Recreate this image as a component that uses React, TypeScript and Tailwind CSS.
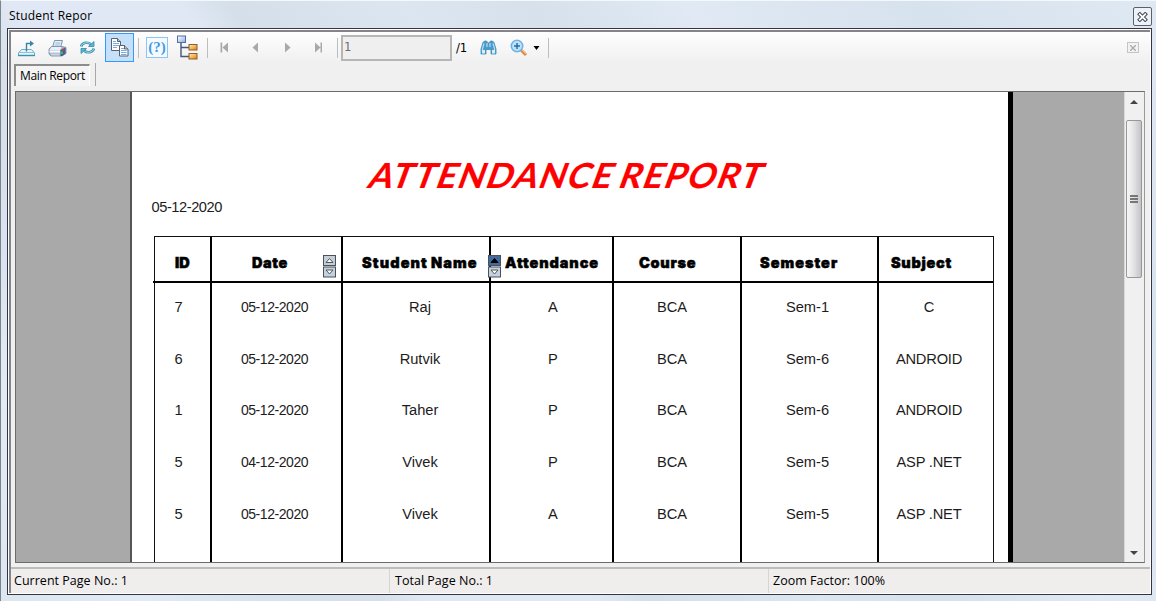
import React from "react";

const HEADERS = [
  { label: "ID", cell: "w-[57px] pr-0 justify-center", text: "tracking-[0.2px]" },
  { label: "Date", cell: "w-[131px] pl-[40px]", text: "tracking-[0.6px]", sort: "idle" },
  { label: "Student Name", cell: "w-[148px] pl-[19px]", text: "tracking-[1.1px] [word-spacing:-1px]", sort: "active" },
  { label: "Attendance", cell: "w-[123px] pl-[14px]", text: "tracking-[0.900px]" },
  { label: "Course", cell: "w-[128px] pl-[25px]", text: "tracking-[0.700px]" },
  { label: "Semester", cell: "w-[137px] pl-[18px]", text: "tracking-[1.000px]" },
  { label: "Subject", cell: "w-[116px] pl-[12px]", text: "tracking-[0.700px]" },
];

const ROWS = [
  ["7", "05-12-2020", "Raj", "A", "BCA", "Sem-1", "C"],
  ["6", "05-12-2020", "Rutvik", "P", "BCA", "Sem-6", "ANDROID"],
  ["1", "05-12-2020", "Taher", "P", "BCA", "Sem-6", "ANDROID"],
  ["5", "04-12-2020", "Vivek", "P", "BCA", "Sem-5", "ASP .NET"],
  ["5", "05-12-2020", "Vivek", "A", "BCA", "Sem-5", "ASP .NET"],
];

const CELLS = [
  "w-[57px] pr-[8px]",
  "w-[131px] pr-[4px] text-[14px] tracking-[-0.45px]",
  "w-[148px] pl-[8px]",
  "w-[123px] pl-[3px]",
  "w-[128px] pr-[10px]",
  "w-[137px] pr-[4px]",
  "w-[116px] pr-[16px] tracking-[-0.2px]",
];

function Sep({ className }: { className: string }) {
  return <div className={`h-5 w-px shrink-0 bg-[#bdbdbd] ${className}`} />;
}

function ExportIcon() {
  return (
    <svg width="20" height="19" viewBox="0 0 20 19" className="shrink-0" fill="none">
      <path d="M4.500 11.500h10l3 3.500v2.500h-16V15z" fill="#e6f3f9" stroke="#6fb0c9" />
      <path d="M1.500 14.500h16" stroke="#8fc4d8" />
      <path d="M1 17.500h17" stroke="#3c8fb0" strokeWidth="1.400" />
      <path d="M9.500 13.500V5.500H14" stroke="#3a86a5" strokeWidth="1.400" />
      <path d="M13 2.500l4 3-4 3z" fill="#3a86a5" />
    </svg>
  );
}

function PrinterIcon() {
  return (
    <svg width="19" height="18" viewBox="0 0 19 18" className="shrink-0">
      <path d="M6.500 1.500h8l-2 7h-8z" fill="#e5f0fa" stroke="#7c95ad" />
      <path d="M7.500 4h5M6.800 6h5" stroke="#9bb8d4" />
      <path d="M3.500 7.500h11l3.500 1v6L14 17H3l-2-2v-5z" fill="#a9b7cb" stroke="#7788a3" strokeWidth=".8" />
      <path d="M3.500 8h10l-1.500 3H1.500z" fill="#e9f0f8" />
      <path d="M1.500 11.500H12v2H1.500z" fill="#fff" />
      <path d="M12.500 11l5-2.500v6L14 17h-1.500z" fill="#3f5c93" />
      <rect x="14" y="9.800" width="2.500" height="2" fill="#c34145" />
      <path d="M12 12.500h3v2.500h-3z" fill="#42b77c" />
      <path d="M2.500 14.500H12l-.5 2h-8z" fill="#c5d3e4" />
    </svg>
  );
}

function RefreshIcon() {
  return (
    <svg width="17" height="15" viewBox="0 0 17 15" className="shrink-0" fill="none">
      <path d="M2 6.500C3.500 2.300 9 1.500 12 4.500" stroke="#4094b6" strokeWidth="2.600" />
      <path d="M2 6.500C3.500 2.300 9 1.500 12 4.500" stroke="#9fdaec" strokeWidth="1" />
      <path d="M15 1.500v5H9.500z" fill="#5eb4d1" stroke="#338aad" strokeWidth=".8" />
      <path d="M15 8.500c-1.500 4.200-7 5-10 2" stroke="#4094b6" strokeWidth="2.600" />
      <path d="M15 8.500c-1.500 4.200-7 5-10 2" stroke="#9fdaec" strokeWidth="1" />
      <path d="M2 13.500v-5h5.500z" fill="#5eb4d1" stroke="#338aad" strokeWidth=".8" />
    </svg>
  );
}

function PagesIcon() {
  return (
    <svg width="20" height="19" viewBox="0 0 20 19">
      <path d="M1.500.500h6l3 3v9h-9z" fill="#fff" stroke="#59616b" />
      <path d="M7.500.500v3h3" fill="#b9c6d3" stroke="#59616b" />
      <path d="M3 3.500h3M3 5.500h6M3 7.500h6M3 9.500h4" stroke="#74aee0" />
      <path d="M9.500 7.500h5l3.500 3.500v7h-8.500z" fill="#fff" stroke="#59616b" />
      <path d="M14.500 7.500v3.500h3.500" fill="#b9c6d3" stroke="#59616b" />
      <path d="M11 10.500h3M11 12.500h5.500M11 14.500h5.500M11 16.500h5.500" stroke="#74aee0" />
    </svg>
  );
}

function TreeIcon() {
  return (
    <svg width="23" height="25" viewBox="0 0 23 25" className="shrink-0">
      <defs>
        <linearGradient id="org" x1="0" x2="1" y1="0" y2="1">
          <stop offset="0" stopColor="#fff0b0" />
          <stop offset="1" stopColor="#e87e08" />
        </linearGradient>
        <linearGradient id="blu" x1="0" x2="1" y1="0" y2="1">
          <stop offset="0" stopColor="#fff" />
          <stop offset="1" stopColor="#8cabe0" />
        </linearGradient>
      </defs>
      <path d="M4 8v13.500h9M4 12.500h9" fill="none" stroke="#425a78" strokeWidth="1.400" />
      <rect x=".5" y="1" width="8" height="6.500" fill="url(#blu)" stroke="#526da5" />
      <rect x="12" y="9.500" width="8" height="5.500" fill="url(#org)" stroke="#8c5e32" />
      <rect x="12" y="18.500" width="8" height="5.500" fill="url(#org)" stroke="#8c5e32" />
    </svg>
  );
}

function BinocularsIcon() {
  return (
    <svg width="17" height="15" viewBox="0 0 17 15" className="shrink-0">
      <path d="M3 2.500 4.500 1h2l1.500 2h1l1.500-2h2L14 2.500 16 9v5h-5V9.500H6V14H1V9z" fill="#4b9ac9" stroke="#3f8dbb" strokeWidth=".8" />
      <path d="M4 3.500 2.500 8.500v4M13 3.500l1.500 5v4M7 3v4M10 3v4" fill="none" stroke="#b5def3" strokeWidth="1.200" />
      <path d="M2 10h3v3.500H2zM12 10h3v3.500h-3z" fill="#d5effb" />
    </svg>
  );
}

function ZoomIcon() {
  return (
    <svg width="18" height="18" viewBox="0 0 18 18" className="shrink-0">
      <path d="M11 11l5 5" stroke="#dc8a42" strokeWidth="3" />
      <path d="M11.500 10.500l5 5" stroke="#f6c18e" />
      <circle cx="7" cy="7" r="5.700" fill="#bfe2fb" stroke="#6fb3e6" strokeWidth="1.600" />
      <path d="M7 4v6M4 7h6" stroke="#286fa9" strokeWidth="1.500" />
    </svg>
  );
}

function SortControl({ active }: { active: boolean }) {
  return (
    <svg width="13" height="23" viewBox="0 0 13 23">
      <rect x=".5" y=".5" width="12" height="10" fill={active ? "#416a9f" : "#c4cfda"} stroke="#4b5159" />
      <rect x=".5" y="12" width="12" height="10" fill="#c4d1df" stroke="#4b5159" />
      <path d="M3 7.500h7L6.500 3.500z" fill={active ? "#000" : "#fff"} stroke={active ? "#000" : "#555"} />
      <path d="M3 15h7l-3.500 4z" fill="#fff" stroke="#555" />
    </svg>
  );
}

function Toolbar() {
  return (
    <div className="flex h-[31px] items-center bg-gradient-to-b from-[#fefefe] to-[#f0f0f0] pl-[6px]">
      <ExportIcon />
      <div className="ml-[11px] flex"><PrinterIcon /></div>
      <div className="ml-[12px] flex"><RefreshIcon /></div>
      <div className="ml-[9px] flex h-[29px] w-[29px] shrink-0 items-center justify-center border border-[#3399ff] bg-[#c4e0fb]">
        <PagesIcon />
      </div>
      <Sep className="ml-[4px]" />
      <div className="ml-[7px] flex h-[21px] w-[22px] shrink-0 items-center justify-center border border-[#8cc4f6] bg-[#f5faff] font-['Liberation_Serif',serif] text-[15px] leading-none font-bold text-[#3f9bea]">
        (?)
      </div>
      <div className="ml-[9px] flex"><TreeIcon /></div>
      <Sep className="ml-[7px]" />
      <svg width="9" height="11" viewBox="0 0 9 11" className="ml-[12px] shrink-0" fill="#a9a9a9">
        <path d="M.5.500h1.700v10H.5zM8 .5v10L2.500 5.500z" />
      </svg>
      <svg width="7" height="11" viewBox="0 0 7 11" className="ml-[23px] shrink-0" fill="#a9a9a9"><path d="M6 .500v10L.5 5.500z" /></svg>
      <svg width="7" height="11" viewBox="0 0 7 11" className="ml-[25px] shrink-0" fill="#a9a9a9"><path d="M1 .500v10l5.500-5z" /></svg>
      <svg width="9" height="11" viewBox="0 0 9 11" className="ml-[23px] shrink-0" fill="#a9a9a9">
        <path d="M1 .500v10l5.500-5zM6.500.500H8v10H6.500z" />
      </svg>
      <Sep className="ml-[14px]" />
      <div className="ml-[3px] h-[26px] w-[111px] shrink-0 border-2 border-[#b6b6b6] bg-[#efefef] pl-px font-['DejaVu_Sans_Condensed','DejaVu_Sans',sans-serif] text-[13px] leading-[20px] text-[#6f6f6f]">
        1
      </div>
      <div className="ml-[4px] w-[13px] shrink-0 font-['DejaVu_Sans_Condensed','DejaVu_Sans',sans-serif] text-[13px] tracking-[-0.2px] text-black">/1</div>
      <div className="ml-[11px] flex"><BinocularsIcon /></div>
      <div className="ml-[13px] flex"><ZoomIcon /></div>
      <svg width="7" height="4" viewBox="0 0 7 4" className="ml-[5px] shrink-0"><path d="M.5 0h6l-3 4z" /></svg>
      <Sep className="ml-[8px]" />
      <div className="mr-[11px] ml-auto flex h-[11px] w-[12px] items-center justify-center border border-[#c4c4c4] bg-[#f2f2f2]">
        <svg width="6" height="6" viewBox="0 0 6 6"><path d="M0 0l6 6M6 0L0 6" stroke="#aaa" strokeWidth="1.300" /></svg>
      </div>
    </div>
  );
}

function ReportTable() {
  return (
    <div className="relative ml-[22px] h-[326px] w-[840px] border border-b-0 border-[#111]">
      <div className="-ml-[2px] flex h-[46px] w-[840px] border-b-2 border-black pl-[2px]">
        {HEADERS.map((h, i) => (
          <div key={h.label} className={`relative flex shrink-0 items-center pt-[9px] ${i < 6 ? "border-r-2 border-black" : ""} ${h.cell}`}>
            <span className={`text-[14.500px] leading-none font-black whitespace-nowrap text-black font-[Inter,sans-serif] [-webkit-text-stroke:0.5px_black] ${h.text}`}>{h.label}</span>
            {h.sort && (
              <div className={`absolute top-[18px] z-10 ${h.sort === "active" ? "right-[-12px]" : "right-[5px]"}`}>
                <SortControl active={h.sort === "active"} />
              </div>
            )}
          </div>
        ))}
      </div>
      <div className="flex h-[280px] w-[839px]">
        {CELLS.map((cell, col) => (
          <div key={col} className={`shrink-0 overflow-hidden text-center text-[14.670px] text-[#1c1c1c] ${col < 6 ? "border-r-2 border-black" : ""} ${cell}`}>
            {ROWS.map((row, r) => (
              <div key={r} className="flex h-[51.700px] items-start justify-center pt-[16px] leading-[17px] whitespace-pre">{row[col]}</div>
            ))}
          </div>
        ))}
      </div>
    </div>
  );
}

function Scrollbar() {
  return (
    <div className="flex w-[20px] shrink-0 flex-col items-center border-l border-[#d8d8d8] bg-[#f0f0f0] pr-px">
      <svg width="8" height="4" viewBox="0 0 8 4" className="mt-[8px]"><path d="M0 4h8L4 0z" fill="#444" /></svg>
      <div className="mt-[16px] flex h-[158px] w-[16px] flex-col items-center justify-center gap-px rounded-[2px] border border-[#979797] bg-gradient-to-r from-[#f7f7f7] via-[#e2e2e4] to-[#c3c3c9]">
        <div className="h-[2px] w-[8px] bg-[#777]" />
        <div className="h-[2px] w-[8px] bg-[#777]" />
        <div className="h-[2px] w-[8px] bg-[#777]" />
      </div>
      <svg width="8" height="4" viewBox="0 0 8 4" className="mt-auto mb-[7px]"><path d="M0 0h8L4 4z" fill="#444" /></svg>
    </div>
  );
}

export default function App() {
  return (
    <div className="flex h-[601px] w-[1156px] flex-col overflow-hidden border-t border-l border-t-[#f4f7fb] border-l-[#7d838a] bg-[linear-gradient(55deg,#dbe6f1_0%,#e2ebf5_9%,#d8e3ef_16%,#d6dfea_24%,#dfe8f4_27%,#dfe8f4_38%,#d5dfea_41%,#dce6f1_52%,#d6e1ec_60%,#e0e9f4_70%,#d6e2ee_85%,#dfe9f3_100%)] pr-[4px] pl-[6px] font-['Liberation_Sans',Arial,sans-serif]">
      <div className="flex h-[27px] shrink-0 items-center justify-between pl-[2px]">
        <span className="pt-[3px] font-['Open_Sans','Noto_Sans',sans-serif] text-[12px] tracking-[0.2px] text-black">Student Repor</span>
        <div className="mt-[4px] flex h-[19px] w-[19px] items-center justify-center rounded-[2px] border border-[#5c6068] bg-[#edf2f8]">
          <svg width="11" height="10" viewBox="0 0 11 10">
            <path d="M2.800 2.300l5.400 5.400M8.200 2.300L2.800 7.700" stroke="#40464f" strokeWidth="3.800" strokeLinecap="square" />
            <path d="M2.800 2.300l5.400 5.400M8.200 2.300L2.800 7.700" stroke="#fff" strokeWidth="1.900" strokeLinecap="square" />
          </svg>
        </div>
      </div>
      <div className="h-[567px] shrink-0 border border-[#35353f] bg-white p-px">
        <div className="flex h-full flex-col border-t-2 border-l-2 border-[#85838b] bg-[#f0f0f0]">
          <Toolbar />
          <div className="flex h-[28px] shrink-0 items-start pl-[3px]">
            <div className="mt-px h-[22px] w-[76px] border-t-2 border-l-2 border-r border-t-[#8d8d8d] border-l-[#8d8d8d] border-r-white bg-[#f4f4f4] pl-[4px] font-['Open_Sans','Noto_Sans',sans-serif] text-[12px] leading-[20px] tracking-[-0.35px] whitespace-nowrap text-black">
              Main Report
            </div>
            <div className="ml-[5px] h-[23px] w-px bg-[#a8a8a8]" />
          </div>
          <div className="ml-[4px] flex h-[472px] w-[1130px] shrink-0 border border-r-[#999] border-[#6b6b6b] bg-[#a9a9a9]">
            <div className="ml-[114px] h-[470px] w-[883px] shrink-0 overflow-hidden border-r-[5px] border-l-2 border-r-black border-l-[#555] bg-white">
              <div className="ml-[232px] h-[107px] pt-[64px]">
                <h1 className="inline-block origin-bottom-left -skew-x-[20deg] font-[Lato,sans-serif] text-[34.500px] leading-[38px] font-bold tracking-[1.650px] whitespace-nowrap text-[#ff0000] [-webkit-text-stroke:0.2px_#ff0000] [word-spacing:-4px]">
                  ATTENDANCE REPORT
                </h1>
              </div>
              <div className="h-[37px] pl-[19.500px] text-[14.670px] leading-[17px] tracking-[-0.45px] text-[#1c1c1c]">05-12-2020</div>
              <ReportTable />
            </div>
            <div className="ml-auto flex"><Scrollbar /></div>
          </div>
          <div className="mt-[4px] flex flex-1 border-t-2 border-[#bcbcbc] bg-[#f0eded] font-['Open_Sans','Noto_Sans',sans-serif] text-[12.500px] leading-[23px] tracking-[0.020px] text-black">
            <div className="w-[379px] border-r border-[#d5d5d5] pl-[3px]">Current Page No.: 1</div>
            <div className="w-[379px] border-r border-[#d5d5d5] pl-[5px]">Total Page No.: 1</div>
            <div className="pl-[4px]">Zoom Factor: 100%</div>
          </div>
        </div>
      </div>
    </div>
  );
}
